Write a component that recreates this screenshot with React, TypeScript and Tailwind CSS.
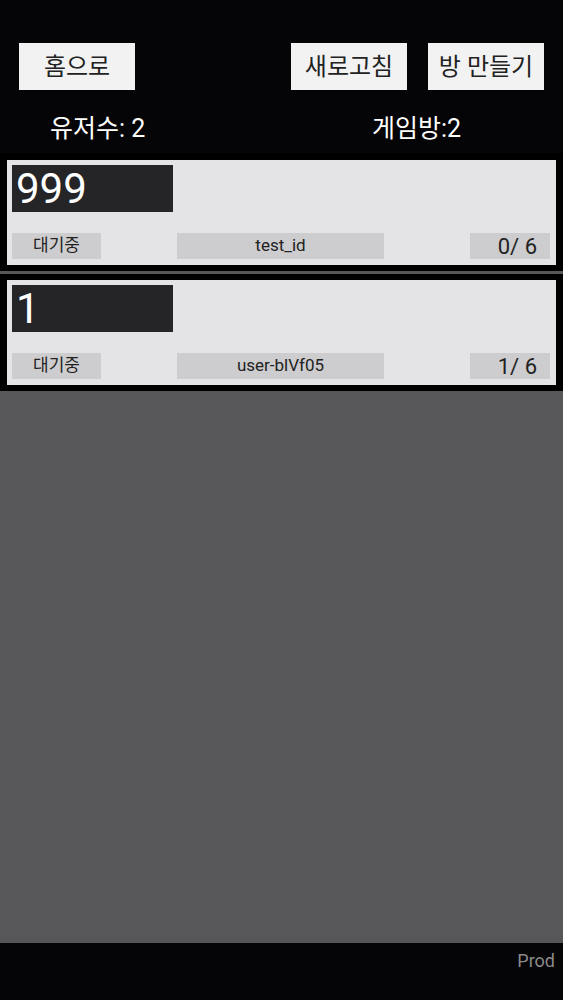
import React from "react";

type Room = {
  id: string;
  title: string;
  status: string;
  owner: string;
  current: number;
  max: number;
};

const rooms: Room[] = [
  { id: "a", title: "999", status: "대기중", owner: "test_id", current: 0, max: 6 },
  { id: "b", title: "1", status: "대기중", owner: "user-blVf05", current: 1, max: 6 },
];

const font = { fontFamily: '"Roboto", "Noto Sans CJK KR", sans-serif' };

function TopButton({ label, className }: { label: string; className?: string }) {
  return (
    <button
      className={
        "flex h-[47px] w-[116px] items-center justify-center bg-[#f2f2f2] text-[24px] text-[#222] " +
        (className || "")
      }
    >
      {label}
    </button>
  );
}

function RoomCard({ room }: { room: Room }) {
  return (
    <div className="bg-black px-[7px] py-[6px] first:pt-[7px]">
      <div className="flex h-[105px] flex-col justify-between bg-[#e4e3e6] pb-[6px] pl-[5px] pr-[6px] pt-[5px]">
        <div className="flex h-[47px] w-[161px] items-center bg-[#252426] pl-[4px] text-[42px] leading-none text-white">
          {room.title}
        </div>
        <div className="flex h-[26px] items-center">
          <div className="flex h-full w-[89px] items-center justify-center bg-[#cdccce] text-[17px] text-[#222]">
            {room.status}
          </div>
          <div className="ml-[76px] flex h-full w-[207px] items-center justify-center bg-[#cdccce] text-[17px] text-[#222]">
            {room.owner}
          </div>
          <div className="ml-auto flex h-full w-[80px] items-center justify-end bg-[#cdccce] pr-[13px] text-[22px] text-[#222]">
            {room.current}/ {room.max}
          </div>
        </div>
      </div>
    </div>
  );
}

export default function App() {
  return (
    <div className="flex h-[1000px] w-[563px] flex-col bg-[#050407]" style={font}>
      <div className="flex px-[19px] pt-[43px]">
        <TopButton label="홈으로" />
        <TopButton label="새로고침" className="ml-auto" />
        <TopButton label="방 만들기" className="ml-[21px]" />
      </div>

      <div className="mb-[9px] mt-[24px] flex h-[30px] items-center text-[25px] text-white">
        <span className="ml-[50px] w-[322px]">유저수: 2</span>
        <span>게임방:2</span>
      </div>

      <div className="flex flex-1 flex-col gap-[3px] bg-[#575658]">
        {rooms.map((room) => (
          <RoomCard key={room.id} room={room} />
        ))}
      </div>

      <div className="flex h-[57px] items-start justify-end pr-[8px] pt-[4px] text-[18px] text-[#8a8a8a]">
        Prod
      </div>
    </div>
  );
}
